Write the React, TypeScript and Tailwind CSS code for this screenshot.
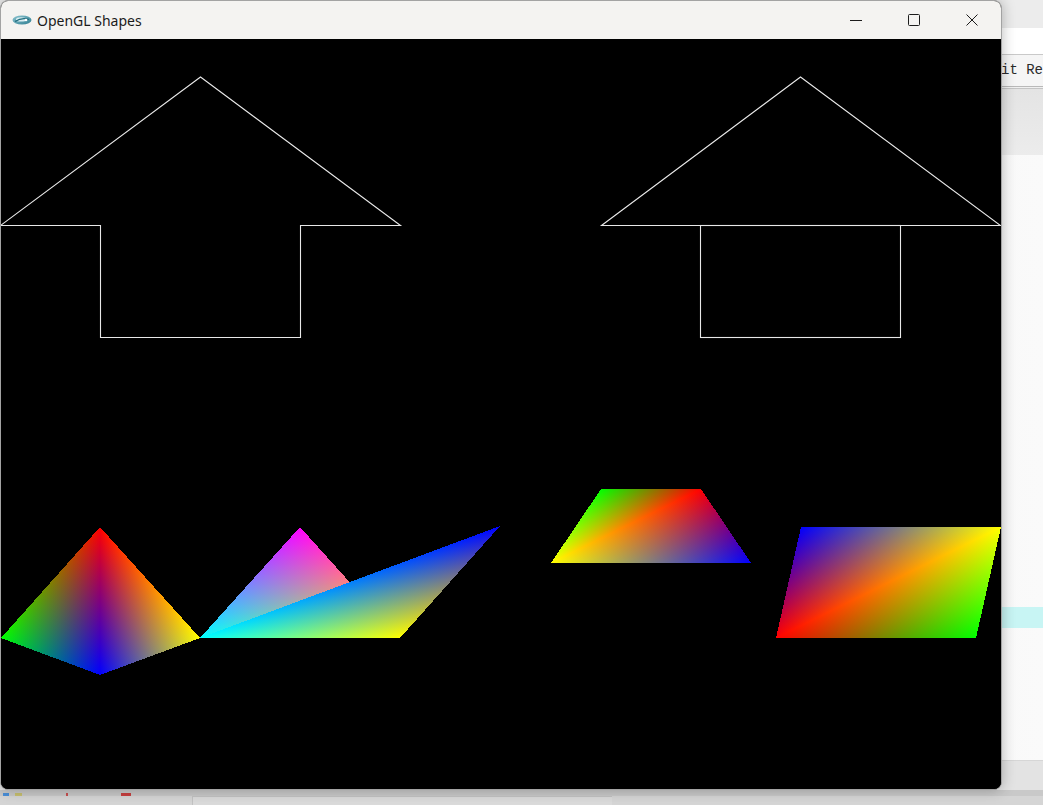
import React from "react";

type V = [number, number];
type C = [number, number, number];

// per-channel linear gradient: barycentric colour is affine, so each channel is one gradient
function channelGrad(p: V[], v: number[]) {
  const [p0, p1, p2] = p;
  const d1x = p1[0] - p0[0], d1y = p1[1] - p0[1];
  const d2x = p2[0] - p0[0], d2y = p2[1] - p0[1];
  const dv1 = v[1] - v[0], dv2 = v[2] - v[0];
  const det = d1x * d2y - d2x * d1y;
  const a = (dv1 * d2y - dv2 * d1y) / det;
  const b = (d1x * dv2 - d2x * dv1) / det;
  const gg = a * a + b * b;
  if (gg < 1e-12) return null;
  const sx = p0[0] - (a * v[0]) / gg;
  const sy = p0[1] - (b * v[0]) / gg;
  return { x1: sx, y1: sy, x2: sx + a / gg, y2: sy + b / gg };
}

const BASE = ["#ff0000", "#00ff00", "#0000ff"];

function Tri({ id, p, c }: { id: string; p: V[]; c: C[] }) {
  const pts = p.map((q) => q.join(",")).join(" ");
  return (
    <g className="isolate">
      {[0, 1, 2].map((k) => {
        const vals = c.map((cc) => cc[k]);
        const g = channelGrad(p, vals);
        const fill = g ? `url(#${id}-${k})` : vals[0] > 0.5 ? BASE[k] : "#000000";
        return (
          <React.Fragment key={k}>
            {g && (
              <defs>
                <linearGradient id={`${id}-${k}`} gradientUnits="userSpaceOnUse" x1={g.x1} y1={g.y1} x2={g.x2} y2={g.y2}>
                  <stop offset="0" stopColor="#000000" />
                  <stop offset="1" stopColor={BASE[k]} />
                </linearGradient>
              </defs>
            )}
            <polygon points={pts} fill={fill} shapeRendering="crispEdges" className={k > 0 ? "mix-blend-screen" : ""} />
          </React.Fragment>
        );
      })}
    </g>
  );
}

const R: C = [1, 0, 0], G: C = [0, 1, 0], B: C = [0, 0, 1], Y: C = [1, 1, 0], M: C = [1, 0, 1], Cy: C = [0, 1, 1];

function GLCanvas() {
  return (
    <svg width="1000" height="750" viewBox="1 39 1000 750" className="block">
      <rect x="1" y="39" width="1000" height="750" fill="#000" />
      <g fill="none" stroke="#e8e8e8" strokeWidth="1.1">
        <polyline points="0.5,225.5 200.5,77 400.5,225.5 300.5,225.5 300.5,337.5 100.5,337.5 100.5,225.5 0.5,225.5" />
        <polygon points="601.5,225.5 800.5,77 1000.5,225.5" />
        <rect x="700.5" y="225.5" width="200" height="112" />
      </g>
      {/* diamond */}
      <Tri id="d1" p={[[100, 527], [1, 638], [100, 675]]} c={[R, G, B]} />
      <Tri id="d2" p={[[100, 527], [200, 638], [100, 675]]} c={[R, Y, B]} />
      {/* overlapping pair */}
      <Tri id="m1" p={[[300, 527], [200, 638], [400, 638]]} c={[M, Cy, Y]} />
      <Tri id="b1" p={[[200, 638], [500, 526], [400, 638]]} c={[Cy, B, Y]} />
      {/* trapezoid */}
      <Tri id="t1" p={[[551, 563], [601, 489], [701, 489]]} c={[Y, G, R]} />
      <Tri id="t2" p={[[551, 563], [701, 489], [751, 563]]} c={[Y, R, B]} />
      {/* parallelogram */}
      <Tri id="p1" p={[[776, 638], [801, 527], [1001, 527]]} c={[R, B, Y]} />
      <Tri id="p2" p={[[776, 638], [1001, 527], [976, 638]]} c={[R, Y, G]} />
    </svg>
  );
}

function AppIcon() {
  return (
    <svg width="20" height="14" viewBox="0 0 20 14">
      <defs>
        <linearGradient id="ic" x1="0" y1="0" x2="1" y2="1">
          <stop offset="0" stopColor="#8cc3cf" />
          <stop offset="1" stopColor="#2f7f92" />
        </linearGradient>
      </defs>
      <ellipse cx="10" cy="7" rx="9.5" ry="4.6" fill="url(#ic)" />
      <ellipse cx="9" cy="6.4" rx="5" ry="2.2" fill="#d9eef2" />
      <path d="M3 8.5 Q10 4 17 6.5" stroke="#1f6b7d" strokeWidth="1.2" fill="none" />
      <circle cx="14" cy="7" r="1.3" fill="#ffffff" />
    </svg>
  );
}

function Caption() {
  return (
    <div className="flex h-[38px] items-center bg-[#f4f3f1]">
      <div className="ml-[11px] flex items-center">
        <AppIcon />
      </div>
      <span className="ml-[5px] text-[14px] text-[#1b1b1b] font-['Noto_Sans','Open_Sans',sans-serif]">OpenGL Shapes</span>
      <div className="ml-auto flex h-full">
        <div className="flex w-[58px] items-center justify-center">
          <svg width="12" height="12" viewBox="0 0 12 12">
            <path d="M0 6.5 H12" stroke="#1c1c1c" strokeWidth="1" />
          </svg>
        </div>
        <div className="flex w-[58px] items-center justify-center">
          <svg width="12" height="12" viewBox="0 0 12 12">
            <rect x="0.5" y="0.5" width="11" height="11" rx="1" fill="none" stroke="#1c1c1c" strokeWidth="1" />
          </svg>
        </div>
        <div className="flex w-[58px] items-center justify-center">
          <svg width="12" height="12" viewBox="0 0 12 12">
            <path d="M0.5 0.5 L11.5 11.5 M11.5 0.5 L0.5 11.5" stroke="#1c1c1c" strokeWidth="1" />
          </svg>
        </div>
      </div>
    </div>
  );
}

function Backdrop() {
  return (
    <div className="flex h-full w-full flex-col bg-[#f7f7f7]">
      <div className="h-[28px] bg-[#ececec]" />
      <div className="h-[26px] bg-white" />
      <div className="h-px bg-[#c9c9c9]" />
      <div className="flex h-[31px] items-center whitespace-nowrap bg-[#f5f5f5] pl-[1001px] font-['Liberation_Mono',monospace] text-[14px] text-[#2a2a2a]">
        it Re
      </div>
      <div className="h-px bg-[#b9b9b9]" />
      <div className="h-px bg-[#f0f0f0]" />
      <div className="h-px bg-[#c4c4c4]" />
      <div className="h-[66px] bg-gradient-to-b from-[#e4e4e4] to-[#ececec]" />
      <div className="flex flex-1 flex-col bg-gradient-to-r from-[#e9e9e9] to-[#fafafa]">
        <div className="h-[452px]" />
        <div className="h-[21px] bg-[#c8f5f4]" />
        <div className="h-[132px]" />
        <div className="h-px bg-[#d6d6d6]" />
        <div className="flex-1 bg-[#e3e3e3]" />
      </div>
      <div className="flex h-[6px] items-end bg-[#c9c9c9]">
        <span className="ml-[3px] h-[3px] w-[6px] bg-[#4a8fd8]" />
        <span className="ml-[6px] h-[3px] w-[7px] bg-[#c8c070]" />
        <span className="ml-[44px] h-[3px] w-[2px] bg-[#c85050]" />
        <span className="ml-[53px] h-[3px] w-[10px] bg-[#c84040]" />
      </div>
      <div className="flex h-[9px] bg-[#d5d5d5]">
        <div className="ml-[192px] w-[420px] border-l border-t border-[#c2c2c2] bg-[#dadada]" />
      </div>
    </div>
  );
}

export default function App() {
  return (
    <div className="relative h-[805px] w-[1043px] overflow-hidden">
      <Backdrop />
      <div className="absolute left-0 top-0 flex h-[790px] w-[1002px] flex-col overflow-hidden rounded-[8px] border border-[#a3a3a3] bg-black shadow-[0_0_14px_rgba(0,0,0,0.28)]">
        <Caption />
        <GLCanvas />
      </div>
    </div>
  );
}
